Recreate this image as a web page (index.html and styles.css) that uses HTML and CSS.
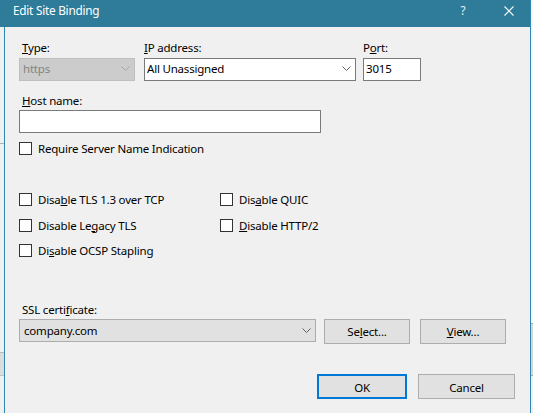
FILE: index.html
```html
<!DOCTYPE html>
<html>
<head>
<meta charset="utf-8">
<title>Edit Site Binding</title>
<link rel="stylesheet" href="styles.css">
</head>
<body>
<div class="desktop">
  <div class="behind behind-left-line"></div>
  <div class="behind behind-left-band"></div>
  <div class="behind behind-right-top"></div>
  <div class="behind behind-right-band"></div>

  <div class="window">
    <div class="titlebar">
      <span class="title">Edit Site Binding</span>
      <span class="tb-help">?</span>
      <svg class="tb-close" width="10" height="10" viewBox="0 0 10 10"><path d="M0.5 0.5 L9.5 9.5 M9.5 0.5 L0.5 9.5" stroke="#fff" stroke-width="1.1" fill="none"/></svg>
    </div>

    <div class="client">
      <div class="top-row">
        <div class="field f-type">
          <div class="lbl lbl-inset"><u>T</u>ype:</div>
          <div class="combo combo-disabled">
            <span class="combo-text">https</span>
            <svg class="chev" width="9" height="5" viewBox="0 0 9 5"><polyline points="0.5,0.5 4.5,4.5 8.5,0.5" fill="none" stroke="#a6a6a6" stroke-width="1"/></svg>
          </div>
        </div>
        <div class="field f-ip">
          <div class="lbl"><u>I</u>P address:</div>
          <div class="combo combo-white">
            <span class="combo-text">All Unassigned</span>
            <svg class="chev" width="9" height="5" viewBox="0 0 9 5"><polyline points="0.5,0.5 4.5,4.5 8.5,0.5" fill="none" stroke="#606060" stroke-width="1"/></svg>
          </div>
        </div>
        <div class="field f-port">
          <div class="lbl">P<u>o</u>rt:</div>
          <div class="textbox textbox-port">3015</div>
        </div>
      </div>

      <div class="field f-host">
        <div class="lbl lbl-inset"><u>H</u>ost name:</div>
        <div class="textbox textbox-host"></div>
      </div>

      <div class="check check-sni"><span class="box"></span><span>Require Server Name Indication</span></div>

      <div class="checks-grid">
        <div class="check"><span class="box"></span><span>Disa<u>b</u>le TLS 1.3 over TCP</span></div>
        <div class="check"><span class="box"></span><span>Dis<u>a</u>ble QUIC</span></div>
        <div class="check"><span class="box"></span><span>Disable Le<u>g</u>acy TLS</span></div>
        <div class="check"><span class="box"></span><span><u>D</u>isable HTTP/2</span></div>
        <div class="check"><span class="box"></span><span>Di<u>s</u>able OCSP Stapling</span></div>
      </div>

      <div class="lbl lbl-inset lbl-ssl">SSL certi<u>f</u>icate:</div>
      <div class="ssl-row">
        <div class="combo combo-grey">
          <span class="combo-text">company.com</span>
          <svg class="chev" width="9" height="5" viewBox="0 0 9 5"><polyline points="0.5,0.5 4.5,4.5 8.5,0.5" fill="none" stroke="#606060" stroke-width="1"/></svg>
        </div>
        <div class="btn btn-select">Se<u>l</u>ect...</div>
        <div class="btn btn-view"><u>V</u>iew...</div>
      </div>

      <div class="footer">
        <div class="btn btn-ok">OK</div>
        <div class="btn btn-cancel">Cancel</div>
      </div>
    </div>
  </div>
</div>
</body>
</html>
```

FILE: styles.css
```css
* { box-sizing: border-box; }

html, body {
  margin: 0;
  padding: 0;
}

body {
  width: 533px;
  height: 413px;
  overflow: hidden;
  background: #f0f0f0;
  font-family: "Noto Sans", "Open Sans", sans-serif;
  font-size: 11.5px;
  letter-spacing: -0.2px;
  line-height: 15px;
  color: #000;
}

u {
  text-decoration: underline;
  text-underline-offset: 1px;
}

.desktop {
  position: relative;
  width: 533px;
  height: 413px;
  overflow: hidden;
  background: #f0f0f0;
}

/* pieces of the windows lying behind the dialog */
.behind { position: absolute; }
.behind-left-line {
  left: 0; top: 143px; width: 4px; height: 1px;
  background: #b0b0b0;
}
.behind-left-band {
  left: 0; top: 352px; width: 4px; height: 24px;
  background: #dcdcdc;
  border-top: 1px solid #b9b9b9;
  border-bottom: 1px solid #c4c4c4;
}
.behind-right-top {
  right: 0; top: 0; width: 2px; height: 323px;
  background: #f7f7f7;
}
.behind-right-band {
  right: 0; top: 323px; width: 2px; height: 53px;
  background: #d6d6d6;
  border-top: 1px solid #a8a8a8;
  border-bottom: 1px solid #a8a8a8;
}

.window {
  position: absolute;
  left: 0;
  top: 0;
  width: 531px;
  height: 413px;
  display: flex;
  flex-direction: column;
  border-right: 1px solid #2f86b3;
}

.titlebar {
  height: 27px;
  flex: none;
  background: #2e7b9a;
  color: #fff;
  display: flex;
  align-items: flex-start;
  padding: 3px 16px 0 13px;
  font-size: 11.8px;
  letter-spacing: -0.25px;
}

.title { flex: 1; }

.tb-help {
  width: 12px;
  text-align: center;
  margin-right: 35px;
  color: #e6eef2;
}

.tb-close {
  margin-top: 3px;
}

.client {
  flex: 1;
  margin-left: 4px;
  border-left: 1px solid #2f86b3;
  background: #f0f0f0;
  padding: 13px 0 0 14px;
  display: flex;
  flex-direction: column;
  align-items: flex-start;
}

.lbl { height: 15px; white-space: nowrap; }
.lbl-inset { padding-left: 3px; }

.top-row {
  display: flex;
  align-items: flex-start;
}

.field { display: flex; flex-direction: column; }
.f-type { width: 116px; }
.f-ip { width: 212px; margin-left: 9px; }
.f-port { width: 58px; margin-left: 7px; }

.combo, .textbox {
  height: 23px;
  border: 1px solid #7a7a7a;
  background: #fff;
  display: flex;
  align-items: center;
  white-space: nowrap;
}

.top-row .combo, .top-row .textbox { margin-top: 3px; }

.combo-text { flex: 1; }
.chev { flex: none; margin-right: 4px; margin-top: -1px; }

.combo-disabled {
  background: #cccccc;
  border-color: #bfbfbf;
  color: #838383;
  padding: 0 0 2px 3px;
}

.combo-white { padding: 0 0 2px 2px; }

.textbox-port { padding: 0 0 2px 2px; }

.f-host { margin-top: 12px; }
.textbox-host { width: 302px; margin-top: 2px; }

.check {
  display: flex;
  align-items: center;
  gap: 6px;
  height: 15px;
  white-space: nowrap;
}

.box {
  width: 13px;
  height: 13px;
  border: 1px solid #333333;
  background: #ffffff;
  flex: none;
}

.check-sni { margin-top: 8px; }

.checks-grid {
  margin-top: 36px;
  display: grid;
  grid-template-columns: 201px auto;
  grid-auto-rows: 15px;
  row-gap: 10.5px;
}

.lbl-ssl { margin-top: 44px; }

.ssl-row {
  margin-top: 2px;
  display: flex;
  align-items: flex-start;
}

.combo-grey {
  width: 297px;
  background: #e1e1e1;
  border-color: #adadad;
  padding: 0 0 0 4px;
}

.btn {
  height: 25px;
  background: #e1e1e1;
  border: 1px solid #adadad;
  display: flex;
  align-items: center;
  justify-content: center;
  white-space: nowrap;
}

.btn-select { width: 86px; margin-left: 8px; }
.btn-view { width: 86px; margin-left: 10px; }

.footer {
  margin-top: 30px;
  align-self: stretch;
  display: flex;
  justify-content: flex-end;
  gap: 11px;
  padding-right: 15px;
}

.btn-ok {
  width: 90px;
  border: 2px solid #0078d7;
  padding-top: 2px;
}

.btn-cancel {
  width: 97px;
  padding-top: 2px;
}
```
